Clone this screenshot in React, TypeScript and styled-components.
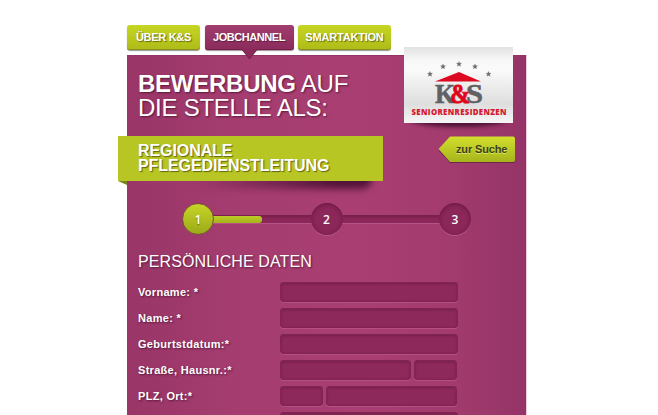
import React from "react";
import styled, { createGlobalStyle, css } from "styled-components";

const GlobalStyle = createGlobalStyle`
  * { box-sizing: border-box; }
  body {
    margin: 0;
    background: #fff;
    font-family: "Liberation Sans", Arial, sans-serif;
    overflow: hidden;
  }
`;

const Page = styled.main`
  width: 658px;
  height: 415px;
  overflow: hidden;
  padding-left: 127px;
`;

const Column = styled.div`
  width: 399px;
`;

const Tabs = styled.nav`
  display: flex;
  gap: 4.5px;
  height: 55px;
  padding-top: 25px;
`;

const Tab = styled.a<{ $active?: boolean; $width: number; $spacing: number }>`
  position: relative;
  z-index: 1;
  width: ${(p) => p.$width}px;
  height: 25px;
  border-radius: 3px;
  text-align: center;
  font-size: 11px;
  font-weight: bold;
  line-height: 24px;
  letter-spacing: ${(p) => p.$spacing}px;
  white-space: nowrap;
  color: #fff;
  ${(p) =>
    p.$active
      ? css`
          background: linear-gradient(#a13d6f, #8a2b5b);
          box-shadow: inset 0 -1px #702249, 0 1px 1px rgba(70, 20, 50, 0.5);
          text-shadow: 1px 1px 1px rgba(60, 10, 40, 0.6);
        `
      : css`
          background: linear-gradient(#c6d622, #aebb18);
          box-shadow: inset 0 -1px #88921c, 0 1px 1px rgba(60, 60, 60, 0.55);
          text-shadow: 1px 1px 1px rgba(80, 85, 10, 0.8);
        `}
`;

const TabPointer = styled.svg`
  position: absolute;
  left: 36px;
  top: 24px;
  display: block;
`;

const Panel = styled.section`
  position: relative;
  height: 380px;
  padding-top: 16px;
  color: #fff;
  background: linear-gradient(90deg, #993567 0, #a53d70 28%, #a93e72 58%, #a33b6e 80%, #953467 100%);
  box-shadow: inset -1px 0 #a32762, inset 0 1px #963266, 1px 0 #edcddd;
`;

const Title = styled.h1`
  margin: 0 0 0 11px;
  height: 65px;
  padding-top: 1px;
  font-size: 24px;
  line-height: 24px;
  font-weight: normal;
  text-shadow: 1px 1px 2px rgba(60, 10, 40, 0.7);
`;

const TitleLine = styled.span<{ $spacing: number }>`
  display: block;
  letter-spacing: ${(p) => p.$spacing}px;
`;

const LogoCard = styled.div`
  position: absolute;
  left: 277px;
  top: -8px;
  width: 109px;
  height: 76px;
  &::before {
    content: "";
    position: absolute;
    inset: 60px 5px -4px 5px;
    border-radius: 0 0 50% 50% / 0 0 8px 8px;
    background: rgba(50, 5, 35, 0.75);
    filter: blur(2px);
  }
`;

const LogoArt = styled.svg`
  position: relative;
  display: block;
`;

const RibbonRow = styled.div`
  display: flex;
  align-items: flex-start;
  height: 67px;
  margin-left: -9px;
`;

const Ribbon = styled.div`
  position: relative;
  width: 265px;
  height: 45px;
  margin-right: 55px;
  &::before {
    content: "";
    position: absolute;
    left: 75px;
    right: 11px;
    top: 30px;
    bottom: -8px;
    background: linear-gradient(90deg, transparent, rgba(60, 8, 42, 0.8) 80%);
    border-radius: 0 0 10px 0;
    filter: blur(3.5px);
  }
  &::after {
    content: "";
    position: absolute;
    left: 0;
    top: 45px;
    border-top: 4px solid #76821b;
    border-left: 9px solid transparent;
  }
`;

const RibbonText = styled.h2`
  position: relative;
  margin: 0;
  height: 45px;
  padding: 7px 0 0 20px;
  background: #b7c622;
  font-size: 16px;
  line-height: 15px;
  font-weight: bold;
  letter-spacing: -0.08px;
  text-shadow: 1px 1px 1px rgba(80, 75, 10, 0.8);
`;

const BackLink = styled.a`
  position: relative;
  width: 77px;
  height: 27px;
  padding-left: 18px;
  font-size: 11px;
  font-weight: bold;
  line-height: 26px;
  letter-spacing: -0.15px;
  color: #3d3f14;
  text-shadow: 0 1px #d9e66a;
`;

const BackShape = styled.svg`
  position: absolute;
  left: 0;
  top: 0;
  overflow: visible;
`;

const BackLabel = styled.span`
  position: relative;
  white-space: nowrap;
`;

const Steps = styled.div`
  display: flex;
  align-items: center;
  width: 289px;
  height: 32px;
  margin-left: 55px;
`;

const Step = styled.div<{ $active?: boolean }>`
  position: relative;
  flex: none;
  width: 32px;
  height: 32px;
  border-radius: 50%;
  font: 600 12px/33px "Open Sans", sans-serif;
  text-align: center;
  ${(p) =>
    p.$active
      ? css`
          background: linear-gradient(#c7d526, #9aaa18);
          border: 1px solid #7b4e40;
          line-height: 31px;
          text-shadow: 0 1px 1px rgba(70, 80, 0, 0.7);
        `
      : css`
          background: #8b2759;
          box-shadow: inset 0 1px 4px rgba(85, 15, 55, 0.7), 0 1px #b9568a;
        `}
`;

const Track = styled.div`
  flex: 1;
  height: 8px;
  margin: 0 -1px;
  background: #8b2759;
  box-shadow: inset 0 2px 2px #762049, 0 1px #b65285;
`;

const Progress = styled.div`
  width: 50%;
  height: 7px;
  margin-top: 1px;
  border-radius: 0 3px 3px 0;
  background: linear-gradient(#bdcb29, #a5b31b);
`;

const SectionTitle = styled.h3`
  margin: 18px 0 0 11px;
  height: 26px;
  font-size: 16px;
  line-height: 18px;
  font-weight: normal;
  letter-spacing: 0.1px;
  text-shadow: 1px 1px 2px rgba(60, 10, 40, 0.7);
`;

const Form = styled.form`
  display: grid;
  row-gap: 6px;
  margin: 3px 0 0 11px;
`;

const Row = styled.label`
  display: flex;
  height: 20px;
`;

const Label = styled.span`
  width: 142px;
  font-size: 11px;
  font-weight: bold;
  line-height: 21px;
  letter-spacing: 0.3px;
  text-shadow: 1px 1px 2px rgba(60, 10, 40, 0.7);
`;

const Fields = styled.span`
  display: flex;
  gap: 3px;
`;

const Field = styled.input<{ $width: number }>`
  width: ${(p) => p.$width}px;
  height: 20px;
  padding: 0 5px;
  border: 1px solid #822452;
  border-radius: 3px;
  outline: none;
  color: #fff;
  background: #8e295b;
  box-shadow: inset 0 1px 3px #742049, 0 1px #b64f82;
`;

const rows = [
  { label: "Vorname: *", widths: [178] },
  { label: "Name: *", widths: [178] },
  { label: "Geburtstdatum:*", widths: [178] },
  { label: "Straße, Hausnr.:*", widths: [131, 43] },
  { label: "PLZ, Ort:*", widths: [43, 131] },
  { label: "", widths: [178] },
];

const stars = [
  [26, 27],
  [39, 19.5],
  [55, 17],
  [71, 19.5],
  [84.5, 27],
];

function Logo() {
  return (
    <LogoCard>
      <LogoArt width="109" height="76" viewBox="0 0 109 76">
        <defs>
          <linearGradient id="paper" x1="0" y1="0" x2="0" y2="1">
            <stop offset="0" stopColor="#e2e2e2" />
            <stop offset="0.18" stopColor="#f8f8f8" />
            <stop offset="0.3" stopColor="#fafafa" />
            <stop offset="0.75" stopColor="#dedede" />
            <stop offset="1" stopColor="#f6f6f6" />
          </linearGradient>
        </defs>
        <rect width="109" height="76" fill="url(#paper)" />
        {stars.map(([x, y]) => (
          <path
            key={x}
            transform={`translate(${x} ${y})`}
            d="M0-2.5 .7-.8 2.5-.7 1.1.5 1.6 2.3 0 1.3-1.6 2.3-1.1.5-2.5-.7-.7-.8Z"
            fill="#686868"
            stroke="#686868"
            strokeWidth=".3"
          />
        ))}
        <path d="M31 34.5 55 25 77 34.5Z" fill="#dc0920" />
        <g fontFamily="Liberation Serif, serif" fontWeight="bold" fontSize="28">
          <text x="31" y="56" fill="#606164" textLength="20" lengthAdjust="spacingAndGlyphs" stroke="#606164" strokeWidth=".6">K</text>
          <text x="62" y="56" fill="#606164" textLength="17" lengthAdjust="spacingAndGlyphs" stroke="#606164" strokeWidth=".6">S</text>
          <text x="46" y="56" fill="#df061d" textLength="20" lengthAdjust="spacingAndGlyphs" stroke="#df061d" strokeWidth=".9">&amp;</text>
        </g>
        <text x="7.5" y="68" fill="#d61830" fontFamily="Open Sans, sans-serif" fontWeight="800" fontSize="7.8" textLength="95" lengthAdjust="spacing">
          SENIORENRESIDENZEN
        </text>
      </LogoArt>
    </LogoCard>
  );
}

export default function App() {
  return (
    <Page>
      <GlobalStyle />
      <Column>
        <Tabs>
          <Tab $width={73} $spacing={-0.3}>ÜBER K&amp;S</Tab>
          <Tab $width={89} $spacing={-0.45} $active>
            JOBCHANNEL
            <TabPointer width="17" height="11" viewBox="0 0 17 11">
              <path d="M0 0H17L8.5 10.5Z" fill="#702249" />
              <path d="M1 0H16L8.5 9Z" fill="#8a2b5b" />
            </TabPointer>
          </Tab>
          <Tab $width={93} $spacing={-0.2}>SMARTAKTION</Tab>
        </Tabs>
        <Panel>
          <Title>
            <TitleLine $spacing={-0.25}>
              <b>BEWERBUNG</b> AUF
            </TitleLine>
            <TitleLine $spacing={-0.25}>DIE STELLE ALS:</TitleLine>
          </Title>
          <Logo />
          <RibbonRow>
            <Ribbon>
              <RibbonText>
                REGIONALE
                <br />
                PFLEGEDIENSTLEITUNG
              </RibbonText>
            </Ribbon>
            <BackLink>
              <BackShape width="77" height="27" viewBox="0 0 77 27">
                <defs>
                  <linearGradient id="lime" x1="0" y1="0" x2="0" y2="1">
                    <stop offset="0" stopColor="#d3df2d" />
                    <stop offset="1" stopColor="#a6b41c" />
                  </linearGradient>
                </defs>
                <path d="M.5 14.5 12 1H75a2 2 0 0 1 2 2V25a2 2 0 0 1-2 2H12Z" fill="#602044" opacity=".75" />
                <path d="M.5 13 12 .5H75a2 2 0 0 1 2 2V24a2 2 0 0 1-2 2H12Z" fill="url(#lime)" />
              </BackShape>
              <BackLabel>zur Suche</BackLabel>
            </BackLink>
          </RibbonRow>
          <Steps>
            <Step $active>1</Step>
            <Track>
              <Progress />
            </Track>
            <Step>2</Step>
            <Track />
            <Step>3</Step>
          </Steps>
          <SectionTitle>PERSÖNLICHE DATEN</SectionTitle>
          <Form>
            {rows.map((row) => (
              <Row key={row.label}>
                <Label>{row.label}</Label>
                <Fields>
                  {row.widths.map((w, i) => (
                    <Field key={i} $width={w} />
                  ))}
                </Fields>
              </Row>
            ))}
          </Form>
        </Panel>
      </Column>
    </Page>
  );
}
